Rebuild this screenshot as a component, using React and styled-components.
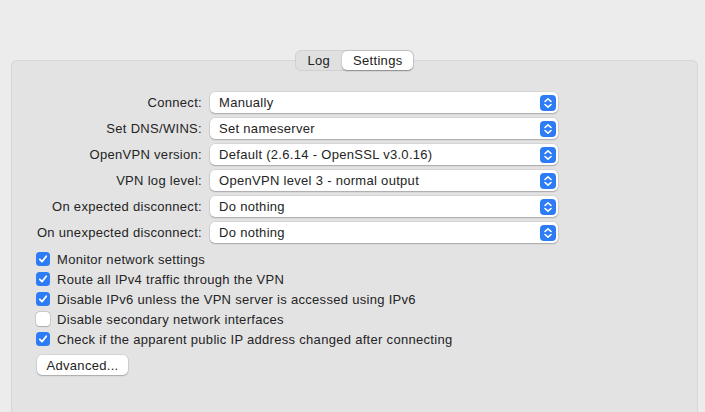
import React from "react";
import styled, { createGlobalStyle } from "styled-components";

const GlobalStyle = createGlobalStyle`
	html, body {
		margin: 0;
		padding: 0;
		background: #ececec;
	}
	body {
		font-family: "Liberation Sans", Arial, sans-serif;
		font-size: 13px;
		letter-spacing: 0.3px;
		color: #242424;
	}
`

const Page = styled.div`
	width: 705px;
	height: 412px;
	padding: 50px 7px 0 11px;
	box-sizing: border-box;
	display: flex;
	flex-direction: column;
	align-items: center;
	overflow: hidden;
`

const Tabs = styled.div`
	position: relative;
	z-index: 1;
	display: flex;
	height: 21px;
	box-sizing: border-box;
	background: #e0e0e0;
	border: 1px solid #d0d0d0;
	border-radius: 6px;
	margin-bottom: -11px;
`

const Tab = styled.div`
	display: flex;
	align-items: center;
	justify-content: center;
	padding: 0 ${p => p.$active ? "11px" : "12px"};
	border-radius: 5px;
	background: ${p => p.$active ? "#fff" : "transparent"};
	box-shadow: ${p => p.$active ? "0 0.5px 1.5px rgba(0,0,0,0.35)" : "none"};
	color: #222;
`

const Panel = styled.section`
	width: 100%;
	flex: 1;
	box-sizing: border-box;
	background: #e3e3e3;
	border: 1px solid #d6d6d6;
	border-bottom: none;
	border-radius: 6px 6px 0 0;
	padding: 31px 0 0 0;
`

const Form = styled.div`
	display: grid;
	grid-template-columns: 176px 348px;
	column-gap: 8px;
	row-gap: 5px;
	padding-left: 14px;
`

const Label = styled.div`
	text-align: right;
	align-self: center;
	white-space: nowrap;
`

const Select = styled.div`
	height: 21px;
	box-sizing: border-box;
	background: #fff;
	border-radius: 5px;
	box-shadow: 0 0 0 0.5px rgba(0,0,0,0.12), 0 1px 1.5px rgba(0,0,0,0.22);
	display: flex;
	align-items: center;
	justify-content: space-between;
	padding: 0 2px 0 9px;
`

const Stepper = styled.span`
	width: 16px;
	height: 16px;
	border-radius: 4px;
	background: #2d7cf6;
	display: flex;
	align-items: center;
	justify-content: center;
`

const Checks = styled.div`
	display: flex;
	flex-direction: column;
	padding: 6px 0 0 24px;
`

const CheckRow = styled.label`
	height: 20px;
	display: flex;
	align-items: center;
	gap: 7px;
	white-space: nowrap;
`

const Box = styled.span`
	width: 14px;
	height: 14px;
	box-sizing: border-box;
	border-radius: 3.5px;
	display: flex;
	align-items: center;
	justify-content: center;
	background: ${p => p.$on ? "#2d7cf6" : "#fff"};
	box-shadow: ${p => p.$on ? "none" : "0 0 0 0.5px rgba(0,0,0,0.2), 0 0.5px 1px rgba(0,0,0,0.15)"};
`

const Button = styled.div`
	margin: 6px 0 0 25px;
	width: 91px;
	height: 20px;
	box-sizing: border-box;
	background: #fff;
	border-radius: 5px;
	box-shadow: 0 0 0 0.5px rgba(0,0,0,0.12), 0 1px 1.5px rgba(0,0,0,0.22);
	display: flex;
	align-items: center;
	justify-content: center;
`

const Arrows = () => (
	<svg width="10" height="12" viewBox="0 0 10 12" fill="none" stroke="#fff" strokeWidth="1.6" strokeLinecap="round" strokeLinejoin="round">
		<path d="M2 4.5 L5 1.8 L8 4.5" />
		<path d="M2 7.5 L5 10.2 L8 7.5" />
	</svg>
)

const Tick = () => (
	<svg width="10" height="10" viewBox="0 0 10 10" fill="none" stroke="#fff" strokeWidth="1.7" strokeLinecap="round" strokeLinejoin="round">
		<path d="M1.8 5.3 L4 7.6 L8.3 2.2" />
	</svg>
)

const rows = [
	["Connect:", "Manually"],
	["Set DNS/WINS:", "Set nameserver"],
	["OpenVPN version:", "Default (2.6.14 - OpenSSL v3.0.16)"],
	["VPN log level:", "OpenVPN level 3 - normal output"],
	["On expected disconnect:", "Do nothing"],
	["On unexpected disconnect:", "Do nothing"],
]

const checks = [
	["Monitor network settings", true],
	["Route all IPv4 traffic through the VPN", true],
	["Disable IPv6 unless the VPN server is accessed using IPv6", true],
	["Disable secondary network interfaces", false],
	["Check if the apparent public IP address changed after connecting", true],
]

export default function App() {
	return (
		<>
			<GlobalStyle />
			<Page>
				<Tabs>
					<Tab>Log</Tab>
					<Tab $active>Settings</Tab>
				</Tabs>
				<Panel>
					<Form>
						{rows.map(([label, value]) =>
							<React.Fragment key={label}>
								<Label>{label}</Label>
								<Select>
									<span>{value}</span>
									<Stepper><Arrows /></Stepper>
								</Select>
							</React.Fragment>
						)}
					</Form>
					<Checks>
						{checks.map(([text, on]) =>
							<CheckRow key={text}>
								<Box $on={on}>{on && <Tick />}</Box>
								<span>{text}</span>
							</CheckRow>
						)}
					</Checks>
					<Button>Advanced...</Button>
				</Panel>
			</Page>
		</>
	)
}
